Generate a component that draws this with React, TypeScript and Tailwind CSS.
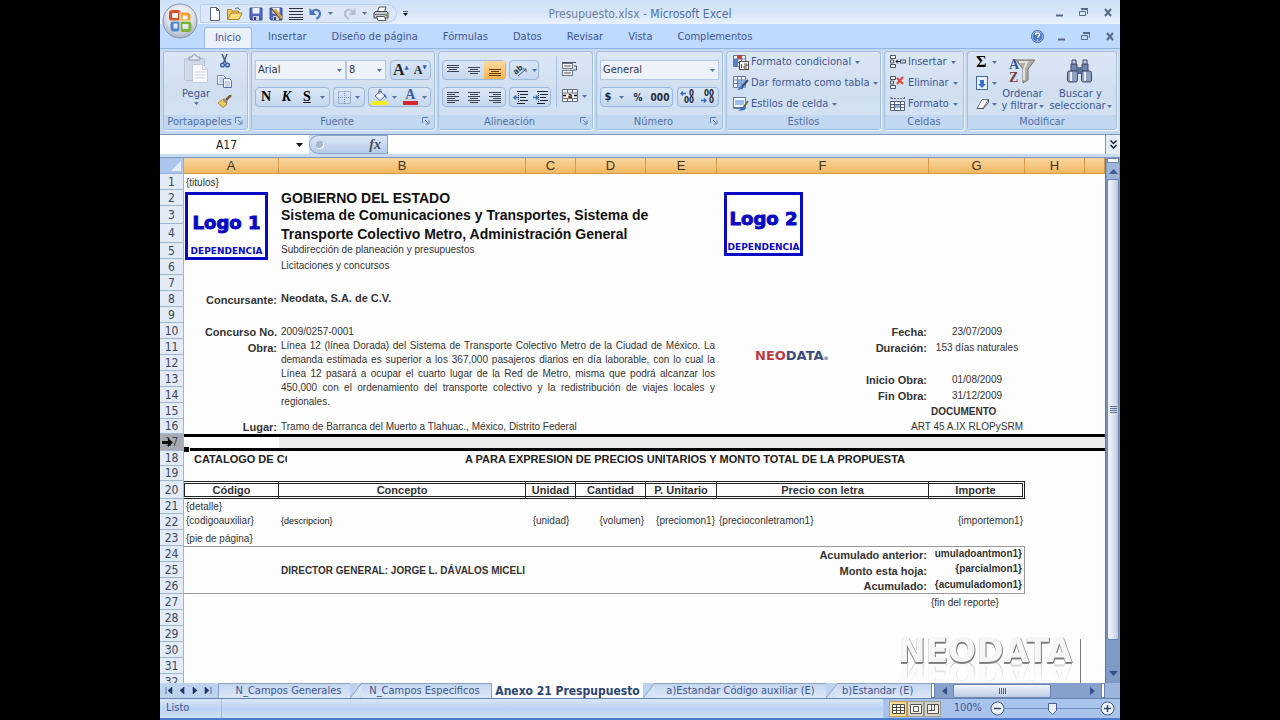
import { clsx } from "clsx";
import type { ReactNode } from "react";

const UI = "font-['DejaVu_Sans_Condensed','DejaVu_Sans',sans-serif]";

function Svg({ w, h, children }: { w: number; h: number; children: ReactNode }) {
  return (
    <svg width={w} height={h} viewBox={`0 0 ${w} ${h}`} fill="none" className="shrink-0" aria-hidden="true">
      {children}
    </svg>
  );
}

function Caret({ dark = false }: { dark?: boolean }) {
  return (
    <Svg w={5} h={3}>
      <path d="M0 0h5L2.500 3z" fill={dark ? "#111" : "#5673a5"} />
    </Svg>
  );
}

// Horizontal bars, used by every text alignment icon.
function Bars({ bars, color = "#3c4250" }: { bars: [number, number, number][]; color?: string }) {
  return (
    <Svg w={14} h={14}>
      {bars.map(([x, y, w]) => (
        <rect key={y} x={x} y={y} width={w} height={1} fill={color} />
      ))}
    </Svg>
  );
}

function IconButton({
  label,
  className = "",
  children,
}: {
  label: string;
  className?: string;
  children: ReactNode;
}) {
  return (
    <button type="button" aria-label={label} className={clsx("flex flex-1 items-center justify-center gap-1", className)}>
      {children}
    </button>
  );
}

function Cluster({ className = "", children }: { className?: string; children: ReactNode }) {
  return (
    <div className={clsx("flex h-5 items-stretch rounded-sm border border-[#9cb7dc] bg-linear-to-b from-[#d9e6f6] to-[#c6d8ee]", className)}>
      {children}
    </div>
  );
}

function Picker({ label, value, className = "" }: { label: string; value: string; className?: string }) {
  return (
    <div className={clsx("relative h-5", className)}>
      <select
        aria-label={label}
        defaultValue={value}
        className="block h-full w-full appearance-none border border-[#b3c8e4] bg-[#eef3fb] pl-[2px] text-[11px] text-[#33334d]"
      >
        <option>{value}</option>
      </select>
      <span className="pointer-events-none absolute inset-y-0 right-1 flex items-center">
        <Caret />
      </span>
    </div>
  );
}

function Group({
  title,
  launcher = false,
  className = "",
  children,
}: {
  title: string;
  launcher?: boolean;
  className?: string;
  children: ReactNode;
}) {
  return (
    <section className={clsx("flex flex-col rounded-[3px] border border-[#a3bede] bg-linear-to-b from-[#dce7f5] via-[#d0dff0] to-[#d5e4f5] shadow-[1px_1px_0_#eaf2fb]", className)}>
      <div className="flex-1">{children}</div>
      <footer className="relative flex h-[14px] items-center justify-center bg-[#c1d8f0] text-[11px] text-[#5470a6]">
        <span className={clsx(launcher && "pr-3")}>{title}</span>
        {launcher && (
          <button type="button" aria-label={`Opciones de ${title}`} className="absolute top-[2px] right-1">
            <Svg w={8} h={8}>
              <path d="M.5 6V.5H6M3 3l3 3M7 3.500V7H3.500" stroke="#6480ae" />
            </Svg>
          </button>
        )}
      </footer>
    </section>
  );
}

/* ---------- Icons ---------- */

function OfficeLogo() {
  return (
    <Svg w={36} h={36}>
      <defs>
        <radialGradient id="orb" cx=".5" cy=".35" r=".65">
          <stop offset="0" stopColor="#fff" />
          <stop offset=".6" stopColor="#dfe3ea" />
          <stop offset="1" stopColor="#a9b3c4" />
        </radialGradient>
      </defs>
      <circle cx="18" cy="18" r="17" fill="url(#orb)" stroke="#8592ab" />
      <rect x="8.500" y="8.500" width="9" height="8" rx="2" stroke="#d8502a" strokeWidth="3" />
      <rect x="19" y="11" width="8" height="7" rx="2" stroke="#f0a030" strokeWidth="3" />
      <rect x="10" y="19" width="7" height="8" rx="2" stroke="#4d86d0" strokeWidth="3" />
      <rect x="19" y="19.500" width="9" height="8" rx="2" stroke="#7fb23c" strokeWidth="3" />
      <path d="M18 9v19M9 18h19" stroke="#fff4d8" />
    </Svg>
  );
}

function Save({ pencil = false }: { pencil?: boolean }) {
  return (
    <Svg w={14} h={14}>
      <path d="M1 1h12v12H2l-1-1z" fill="#5366bd" stroke="#3b4a94" />
      <rect x="3.500" y="1" width="7" height="5.500" fill="#eef2fb" />
      <rect x="4" y="9" width="6" height="4" fill="#c9cfdf" />
      <rect x="5" y="10" width="2" height="3" fill="#333c66" />
      {pencil && <path d="M4 3l8 9M6 2l7 9" stroke="#d7a44a" strokeWidth="2" />}
      {pencil && <path d="M3 2l9 11" stroke="#4b4430" />}
    </Svg>
  );
}

function Undo({ faded = false, flip = false }: { faded?: boolean; flip?: boolean }) {
  return (
    <Svg w={13} h={13}>
      <g transform={flip ? "matrix(-1 0 0 1 13 0)" : undefined}>
        <path d="M3 5c3-4 8-2 8 1.500 0 2.500-1.500 4-3.500 5.500" stroke={faded ? "#b4bfd0" : "#4a74c4"} strokeWidth="2.200" />
        <path d="M.5 1v7h7z" fill={faded ? "#b4bfd0" : "#4a74c4"} />
      </g>
    </Svg>
  );
}

function Printer() {
  return (
    <Svg w={16} h={16}>
      <path d="M4.500 6L6 1h7l-1.500 5" fill="#fff" stroke="#555" />
      <path d="M1 7l2-1.500h11L15 7v5H1z" fill="#c8cbd2" stroke="#45474e" />
      <path d="M3.500 10.500h8l1.500 4h-8z" fill="#fff" stroke="#555" />
      <path d="M2 8.500h12" stroke="#6d7078" />
      <rect x="12" y="8" width="2" height="2" fill="#6aa83a" />
    </Svg>
  );
}

function Paste() {
  return (
    <Svg w={26} h={30}>
      <rect x="1.500" y="4.500" width="20" height="22" rx="1" fill="#cfd9e8" stroke="#b4c2d6" />
      <path d="M6 6V3h3c0-3 5-3 5 0h3v3z" fill="#e4e8ef" stroke="#8b98ac" />
      <path d="M9.500 10.500h10l5 5v13h-15z" fill="#f8fafd" stroke="#c2cad8" />
      <path d="M19.500 10.500v5h5M12 18h10M12 21h10M12 24h10" stroke="#ccd5e3" />
    </Svg>
  );
}

function Scissors() {
  return (
    <Svg w={12} h={14}>
      <path d="M3 0l4 9M8 0L4.500 9" stroke="#46597e" strokeWidth="1.500" />
      <circle cx="3.500" cy="11" r="1.800" stroke="#3b5fae" strokeWidth="1.500" />
      <circle cx="8.500" cy="11" r="1.800" stroke="#3b5fae" strokeWidth="1.500" />
    </Svg>
  );
}

function Copy() {
  return (
    <Svg w={15} h={13}>
      <path d="M.5.5h6l2 2v7h-8z" fill="#f2f6fd" stroke="#6a8ac4" />
      <path d="M2 3h4M2 5h4M2 7h4" stroke="#9ab2dc" />
      <path d="M6.500 3.500h6l2 2v7h-8z" fill="#f2f6fd" stroke="#5478b8" />
      <path d="M8 7h5M8 9h5M8 11h5" stroke="#9ab2dc" />
    </Svg>
  );
}

function Brush() {
  return (
    <Svg w={14} h={13}>
      <path d="M13 0L8 5" stroke="#7b5a2d" strokeWidth="2.500" />
      <path d="M6 3l4 4-1.500 1.500-4-4z" fill="#8d9099" />
      <path d="M4.500 4.500l4.500 4.500-4 3.500L0 8z" fill="#e8c860" stroke="#a98c35" />
    </Svg>
  );
}

function Bucket() {
  return (
    <Svg w={16} h={16}>
      <rect x="0" y="12" width="15" height="4" fill="#f4f01c" />
      <path d="M3 7l5-5 5 5-5 4.500z" fill="#eef2f7" stroke="#5a6478" />
      <path d="M7 5V1.500C7 0 9 0 9 1.500V4" stroke="#5a6478" />
      <path d="M12 5c2 0 3 2 2.500 5L12 7z" fill="#4d6fb3" />
    </Svg>
  );
}

function Borders() {
  return (
    <Svg w={13} h={13}>
      <path d="M.5.5h12v12H.5zM6.500 0v13M0 6.500h13" stroke="#7d8ba6" strokeDasharray="1 1" />
    </Svg>
  );
}

function Indent({ out = false }: { out?: boolean }) {
  return (
    <Svg w={15} h={13}>
      <path d="M4 .5h11M7 3.500h8M7 6.500h6M7 9.500h8M4 12.500h8" stroke="#1d2230" />
      <path d={out ? "M6 6.500H1M3 4.500l-2 2 2 2" : "M0 6.500h5M3 4.500l2 2-2 2"} stroke="#3a6fbd" strokeWidth="1.500" />
      <path d="M5.500 0v13" stroke="#1d2230" strokeDasharray="1 1" />
    </Svg>
  );
}

function Orientation() {
  return (
    <Svg w={16} h={16}>
      <text x="2" y="10" fontSize="8" fontWeight="700" fill="#333a48" transform="rotate(-40 7 9)">
        ab
      </text>
      <path d="M6 14l8-7M11 7h3v3" stroke="#4d556a" />
    </Svg>
  );
}

function WrapText() {
  return (
    <Svg w={16} h={15}>
      <rect x=".5" y="1.500" width="10" height="5" fill="#f5f7fb" stroke="#6d7686" />
      <rect x=".5" y="8.500" width="10" height="5" fill="#f5f7fb" stroke="#6d7686" />
      <path d="M0 .5h14M2 4h7M2 11h7M12 4h2.500v4H11" stroke="#4a5260" />
    </Svg>
  );
}

function MergeCells() {
  return (
    <Svg w={16} h={14}>
      <path d="M.5.5h15v12H.5zM0 4h16M0 9.500h16M5.500 0v4M10.500 0v4M5.500 9.500V13M10.500 9.500V13" fill="#f1f4f9" stroke="#68707f" />
      <path d="M1 6.500h3M12 6.500h3" stroke="#111" strokeWidth="1.500" />
      <text x="6" y="9" fontSize="7" fontWeight="700" fill="#111">
        a
      </text>
    </Svg>
  );
}

function Decimals({ add = false }: { add?: boolean }) {
  return (
    <Svg w={16} h={16}>
      <path
        d={add ? "M6 4.500H1M3 2.500l-2 2 2 2" : "M1 11.500h5M4 9.500l2 2-2 2"}
        stroke="#3a6fbd"
        strokeWidth="1.500"
      />
      <g fill="#222838" fontSize="8" fontWeight="700">
        <text x={add ? 9 : 4} y="7">
          {add ? "0" : "00"}
        </text>
        <text x={add ? 4 : 9} y="14">
          {add ? "00" : "0"}
        </text>
      </g>
    </Svg>
  );
}

function StyleIcon({ kind }: { kind: "conditional" | "table" | "cell" }) {
  return (
    <Svg w={16} h={16}>
      <path d="M.5 1.500h12v11H.5zM0 5h13M0 8.500h13M4.500 1v12M8.500 1v12" fill="#fafcff" stroke="#5f7bab" />
      {kind === "conditional" && (
        <>
          <rect x="4" y="1" width="5" height="4" fill="#c4443e" />
          <rect x="1" y="5" width="3" height="7" fill="#5b7fc6" />
          <rect x="6.500" y="7.500" width="9" height="8" fill="#fff" stroke="#53463d" />
          <path d="M8.500 10v4M11 10h3v2h-3v2h3" stroke="#53463d" />
        </>
      )}
      {kind === "table" && (
        <>
          <rect x="5" y="5" width="8" height="8" fill="#79a3e2" opacity=".8" />
          <path d="M15 5l-7 8" stroke="#3a4a66" strokeWidth="2" />
          <path d="M9 10l-5 5 6-1z" fill="#4a76c0" />
        </>
      )}
      {kind === "cell" && (
        <>
          <rect x=".5" y="1.500" width="12" height="10" fill="#f4f8ff" stroke="#5f7bab" />
          <rect x="2" y="4" width="9" height="5" fill="#9dbdec" />
          <path d="M15 5l-5 7" stroke="#6d6a45" strokeWidth="2" />
          <path d="M11 10l-6 5 7-1z" fill="#3f6cba" />
        </>
      )}
    </Svg>
  );
}

function CellIcon({ kind }: { kind: "insert" | "delete" | "format" }) {
  if (kind === "format") {
    return (
      <Svg w={16} h={16}>
        <path d="M1 1v3M14.500 1v3M1 2.500h14" stroke="#53617e" strokeDasharray="2 1" />
        <path d="M.5 5.500h14v9H.5zM0 8.500h15M0 11.500h15M4.500 5v10M10.500 5v10" fill="#fff" stroke="#53617e" />
        <rect x="5" y="9" width="5" height="3" fill="#8faad4" />
      </Svg>
    );
  }
  return (
    <Svg w={16} h={14}>
      <path d="M.5.5h5v3h-5zM.5 9.500h5v3h-5zM.5 5h3v3h-3z" fill="#fff" stroke="#4a5468" />
      {kind === "insert" ? (
        <>
          <path d="M10 6.500H6M8 4.500l-2 2 2 2" stroke="#111" />
          <rect x="10.500" y="5" width="5" height="3" fill="#c8d8f0" stroke="#4a5468" />
        </>
      ) : (
        <path d="M7 2l6 6M13 1L7 8" stroke="#e0443a" strokeWidth="2" />
      )}
    </Svg>
  );
}

function FillDown() {
  return (
    <Svg w={12} h={14}>
      <rect x=".5" y=".5" width="11" height="13" fill="#e6eefb" stroke="#45679f" />
      <path d="M4 4h4v4h2l-4 4-4-4h2z" fill="#3a6fca" />
    </Svg>
  );
}

function Eraser() {
  return (
    <Svg w={14} h={12}>
      <path d="M6 1.500h6.500L8 8.500 6 10.500H1z" fill="#fff" stroke="#737987" />
      <path d="M12.500 1.500v3L7 11M1 10.500h7" stroke="#4b505c" />
    </Svg>
  );
}

function SortFilter() {
  return (
    <Svg w={28} h={28}>
      <path d="M8 4h19l-7 9v11l-5 3V13z" fill="#b1aea8" stroke="#77736c" />
      <path d="M11 6h8l-3 7v11" stroke="#e3e1dc" strokeWidth="2" />
      <text x="1" y="13" fontSize="14" fontWeight="700" fontFamily="Liberation Serif" fill="#35559c">
        A
      </text>
      <text x="1" y="26" fontSize="14" fontWeight="700" fontFamily="Liberation Serif" fill="#7d3b42">
        Z
      </text>
    </Svg>
  );
}

function Binoculars() {
  return (
    <Svg w={28} h={26}>
      <path d="M5 6h6v7H5zM16 6h6v7h-6z" fill="#7587a8" stroke="#3c4b6b" />
      <path d="M6 2h4v4H6zM17 2h4v4h-4z" fill="#c0cbdf" stroke="#3c4b6b" />
      <path d="M11 9h5v7h-5z" fill="#5d6f92" />
      <rect x="1.500" y="13" width="10" height="11" rx="2" fill="#8fa0c0" stroke="#3c4b6b" />
      <rect x="15.500" y="13" width="10" height="11" rx="2" fill="#8fa0c0" stroke="#3c4b6b" />
      <path d="M5 14v9M19 14v9" stroke="#e8eef8" strokeWidth="2" />
    </Svg>
  );
}

function WindowControls({ className = "" }: { className?: string }) {
  return (
    <div className={clsx("flex items-center gap-4", className)}>
      <button type="button" aria-label="Minimizar">
        <Svg w={7} h={9}>
          <path d="M0 7.500h7" stroke="#5a6a86" strokeWidth="2" />
        </Svg>
      </button>
      <button type="button" aria-label="Restaurar">
        <Svg w={9} h={9}>
          <path d="M2 1.500h6.500V6M.5 3.500h6v4h-6z" stroke="#5a6a86" />
          <path d="M2 1h7" stroke="#5a6a86" strokeWidth="2" />
        </Svg>
      </button>
      <button type="button" aria-label="Cerrar">
        <Svg w={8} h={9}>
          <path d="M1 1l6 7M7 1L1 8" stroke="#5a6a86" strokeWidth="2" />
        </Svg>
      </button>
    </div>
  );
}

/* ---------- Top chrome ---------- */

function TitleBar() {
  return (
    <header className="relative flex h-6 items-center justify-center bg-linear-to-b from-[#cfe2fb] via-[#d6e5f8] to-[#e9f2fd]">
      <button type="button" aria-label="Botón de Office" className="absolute top-[3px] left-[2px] z-10">
        <OfficeLogo />
      </button>
      <div className="absolute top-1 left-10 flex h-[19px] w-[197px] items-center rounded-r-full border border-[#b9cfec] bg-[#dbe7f6] pl-2">
        <div className="flex items-center gap-[6px]">
          <Svg w={12} h={14}>
            <path d="M1.500.5h6l3 3v10h-9z" fill="#fff" stroke="#5b6475" />
            <path d="M7.500.5v3h3" stroke="#5b6475" />
          </Svg>
          <Svg w={16} h={13}>
            <path d="M.5 12V2.500h4l1 1.500h6V6" fill="#f2c84f" stroke="#a7812c" />
            <path d="M.5 12.500L4 6h11L12 12.500z" fill="#fbdd7b" stroke="#a7812c" />
            <path d="M8 2c2-2 4-1 5 1" stroke="#3d5a94" />
          </Svg>
          <Save />
          <Save pencil />
          <Svg w={14} h={12}>
            <path d="M0 .5h14M0 3.500h14M0 6.500h14M0 9.500h14M0 11.500h14" stroke="#2c313d" />
          </Svg>
          <Undo />
          <Caret />
          <span className="ml-1 flex items-center gap-[6px]">
            <Undo faded flip />
            <Caret />
          </span>
          <Printer />
        </div>
        <span className="absolute top-[6px] -right-3 flex flex-col items-center gap-px">
          <span className="h-px w-[5px] bg-[#3f5786]" />
          <Caret dark />
        </span>
      </div>
      <h1 className="pt-1 text-xs text-[#6d7f9d]">
        Presupuesto.xlsx - <span className="text-[#4c6ea8]">Microsoft Excel</span>
      </h1>
      <WindowControls className="absolute top-2 right-2" />
    </header>
  );
}

const tabs = ["Insertar", "Diseño de página", "Fórmulas", "Datos", "Revisar", "Vista", "Complementos"];

function TabRow() {
  return (
    <nav className="flex h-6 items-end bg-[#bfdaff] pl-11 text-[11px] text-[#3f5590]">
      <a href="#inicio" className="flex h-[21px] w-12 items-center justify-center rounded-t-[3px] border border-b-0 border-[#9dbbe6] bg-[#eaf1fb]">
        Inicio
      </a>
      <div className="flex h-[21px] flex-1 items-center gap-[25px] pl-4">
        {tabs.map((tab) => (
          <a key={tab} href={`#${tab}`}>
            {tab}
          </a>
        ))}
      </div>
      <div className="flex h-6 items-center gap-[14px] pr-[6px]">
        <button type="button" aria-label="Ayuda">
          <Svg w={13} h={13}>
            <circle cx="6.500" cy="6.500" r="5.500" fill="#4877c9" stroke="#dce9fb" />
            <circle cx="6.500" cy="6.500" r="6" stroke="#3a62ad" />
            <path d="M4.500 5c0-3 4-2.500 4 0 0 1.500-2 1.500-2 3M6.500 9.500v1" stroke="#fff" strokeWidth="1.500" />
          </Svg>
        </button>
        <WindowControls />
      </div>
    </nav>
  );
}

function MenuButton({ icon, children }: { icon: ReactNode; children: ReactNode }) {
  return (
    <button type="button" className="flex h-5 items-center gap-[2px] whitespace-nowrap text-[11px] text-[#3f5590]">
      {icon}
      <span className="pr-[2px]">{children}</span>
      <Caret />
    </button>
  );
}

function Ribbon() {
  return (
    <div className="flex h-[86px] gap-[3px] border-t border-[#8db2e3] bg-[#c6d9ee] px-[3px] pt-[2px] pb-1">
      <Group title="Portapapeles" launcher className="w-[85px]">
        <div className="flex pt-[2px] pl-[18px]">
          <button type="button" className="flex flex-col items-center text-[11px] text-[#3f5590]">
            <Paste />
            <span className="mt-[2px] leading-4">Pegar</span>
            <Caret />
          </button>
          <div className="flex flex-col items-center gap-[7px] pl-[7px]">
            <button type="button" aria-label="Cortar">
              <Scissors />
            </button>
            <button type="button" aria-label="Copiar">
              <Copy />
            </button>
            <button type="button" aria-label="Copiar formato">
              <Brush />
            </button>
          </div>
        </div>
      </Group>

      <Group title="Fuente" launcher className="w-[184px]">
        <div className="flex flex-col gap-[7px] px-[3px] pt-2">
          <div className="flex">
            <Picker label="Fuente" value="Arial" className="w-[91px]" />
            <Picker label="Tamaño de fuente" value="8" className="w-10" />
            <Cluster className="ml-1 flex-1">
              <IconButton label="Aumentar tamaño">
                <span className="font-['Liberation_Serif',serif] text-base leading-4 font-bold text-[#222]">A</span>
                <span className="-ml-1 h-3 text-[6px] leading-none text-[#3a5fae]">▲</span>
              </IconButton>
              <IconButton label="Reducir tamaño">
                <span className="font-['Liberation_Serif',serif] text-xs leading-4 font-bold text-[#222]">A</span>
                <span className="-ml-1 h-3 text-[6px] leading-none text-[#3a5fae]">▼</span>
              </IconButton>
            </Cluster>
          </div>
          <div className="flex gap-[3px] font-['Liberation_Serif',serif] text-sm text-black">
            <Cluster className="w-[75px]">
              <IconButton label="Negrita">
                <b>N</b>
              </IconButton>
              <IconButton label="Cursiva">
                <b className="italic">K</b>
              </IconButton>
              <IconButton label="Subrayado">
                <b className="underline">S</b>
              </IconButton>
              <IconButton label="Tipo de subrayado" className="max-w-3">
                <Caret />
              </IconButton>
            </Cluster>
            <Cluster className="w-8">
              <IconButton label="Bordes">
                <Borders />
                <Caret />
              </IconButton>
            </Cluster>
            <Cluster className="flex-1">
              <IconButton label="Color de relleno">
                <Bucket />
                <Caret />
              </IconButton>
              <IconButton label="Color de fuente">
                <span className="flex h-4 w-[15px] items-center justify-center border-b-4 border-[#d8262c] text-sm font-bold text-[#3d5aa0]">
                  A
                </span>
                <Caret />
              </IconButton>
            </Cluster>
          </div>
        </div>
      </Group>

      <Group title="Alineación" launcher className="w-[155px]">
        <div className="flex pt-2 pl-[3px]">
          <div className="flex w-[111px] flex-col gap-[7px]">
            <div className="flex gap-[3px]">
              <Cluster className="w-16">
                <IconButton label="Alinear arriba">
                  <Bars bars={[[1, 2, 12], [1, 4, 12], [3, 6, 8], [1, 8, 12]]} />
                </IconButton>
                <IconButton label="Alinear en el medio">
                  <Bars bars={[[1, 4, 12], [3, 6, 8], [1, 8, 12], [3, 10, 8]]} />
                </IconButton>
                <IconButton label="Alinear abajo" className="bg-linear-to-b from-[#fbd9a0] to-[#fdb44a]">
                  <Bars color="#5f3d0d" bars={[[1, 6, 12], [3, 8, 8], [1, 10, 12], [1, 12, 12]]} />
                </IconButton>
              </Cluster>
              <Cluster className="w-[30px]">
                <IconButton label="Orientación">
                  <Orientation />
                  <Caret />
                </IconButton>
              </Cluster>
            </div>
            <div className="flex gap-[3px]">
              <Cluster className="w-16">
                <IconButton label="Alinear a la izquierda">
                  <Bars bars={[[1, 2, 12], [1, 4, 8], [1, 6, 12], [1, 8, 8], [1, 10, 12], [1, 12, 8]]} />
                </IconButton>
                <IconButton label="Centrar">
                  <Bars bars={[[1, 2, 12], [3, 4, 8], [1, 6, 12], [3, 8, 8], [1, 10, 12], [3, 12, 8]]} />
                </IconButton>
                <IconButton label="Alinear a la derecha">
                  <Bars bars={[[1, 2, 12], [5, 4, 8], [1, 6, 12], [5, 8, 8], [1, 10, 12], [5, 12, 8]]} />
                </IconButton>
              </Cluster>
              <Cluster className="w-[42px]">
                <IconButton label="Disminuir sangría">
                  <Indent out />
                </IconButton>
                <IconButton label="Aumentar sangría">
                  <Indent />
                </IconButton>
              </Cluster>
            </div>
          </div>
          <div className="-mt-1 ml-[3px] flex flex-col gap-3 border-l border-[#a9c1e0] pt-[6px] pl-[5px]">
            <button type="button" aria-label="Ajustar texto">
              <WrapText />
            </button>
            <button type="button" aria-label="Combinar y centrar" className="flex items-center gap-1">
              <MergeCells />
              <Caret />
            </button>
          </div>
        </div>
      </Group>

      <Group title="Número" launcher className="w-[127px]">
        <div className="flex flex-col gap-[7px] px-[3px] pt-2">
          <Picker label="Formato de número" value="General" />
          <div className="flex gap-1 text-[10px] font-bold text-[#222838]">
            <Cluster className="flex-1">
              <IconButton label="Moneda">
                <span className="pr-1 text-[11px]">$</span>
                <Caret />
              </IconButton>
              <IconButton label="Porcentaje" className="max-w-5">
                %
              </IconButton>
              <IconButton label="Millares" className="max-w-6">
                000
              </IconButton>
            </Cluster>
            <Cluster className="w-[42px]">
              <IconButton label="Aumentar decimales">
                <Decimals add />
              </IconButton>
              <IconButton label="Disminuir decimales">
                <Decimals />
              </IconButton>
            </Cluster>
          </div>
        </div>
      </Group>

      <Group title="Estilos" className="w-[155px]">
        <div className="flex flex-col gap-px pl-[6px]">
          <MenuButton icon={<StyleIcon kind="conditional" />}>Formato condicional</MenuButton>
          <MenuButton icon={<StyleIcon kind="table" />}>Dar formato como tabla</MenuButton>
          <MenuButton icon={<StyleIcon kind="cell" />}>Estilos de celda</MenuButton>
        </div>
      </Group>

      <Group title="Celdas" className="w-[80px]">
        <div className="flex flex-col gap-px pl-[5px]">
          <MenuButton icon={<CellIcon kind="insert" />}>Insertar</MenuButton>
          <MenuButton icon={<CellIcon kind="delete" />}>Eliminar</MenuButton>
          <MenuButton icon={<CellIcon kind="format" />}>Formato</MenuButton>
        </div>
      </Group>

      <Group title="Modificar" className="w-[150px]">
        <div className="flex pl-2 text-[11px] text-[#3f5590]">
          <div className="flex flex-col gap-px">
            <button type="button" aria-label="Autosuma" className="flex h-5 items-center gap-[6px] font-['Liberation_Serif',serif] text-base font-bold text-black">
              Σ
              <Caret />
            </button>
            <button type="button" aria-label="Rellenar" className="flex h-5 items-center gap-1">
              <FillDown />
              <Caret />
            </button>
            <button type="button" aria-label="Borrar" className="flex h-5 items-center gap-[2px]">
              <Eraser />
              <Caret />
            </button>
          </div>
          <button type="button" className="flex w-[50px] flex-col items-center pt-1 leading-3 whitespace-nowrap">
            <SortFilter />
            <span className="mt-1">Ordenar</span>
            <span className="flex items-center gap-px">
              y filtrar <Caret />
            </span>
          </button>
          <button type="button" className="flex w-[66px] flex-col items-center pt-[6px] leading-3 whitespace-nowrap">
            <Binoculars />
            <span className="mt-1">Buscar y</span>
            <span className="flex items-center gap-px">
              seleccionar <Caret />
            </span>
          </button>
        </div>
      </Group>
    </div>
  );
}

function FormulaBar() {
  return (
    <div className="flex h-6 items-stretch border-y border-[#7d96bd] bg-[#c9dbf2] pb-[3px]">
      <label className="relative flex w-[149px] items-center bg-white">
        <input aria-label="Cuadro de nombres" defaultValue="A17" className="w-full pr-4 text-center text-xs text-[#222]" />
        <span className="pointer-events-none absolute right-[6px]">
          <Svg w={7} h={4}>
            <path d="M0 0h7L3.500 4z" fill="#111" />
          </Svg>
        </span>
      </label>
      <button type="button" aria-label="Insertar función" className="flex w-[79px] items-center justify-between rounded-l-full border border-[#8ba3c9] bg-linear-to-b from-[#dce7f6] to-[#b4cbe9] px-[6px]">
        <span className="size-2 rounded-full bg-[#a9b7cd] shadow-[inset_-1px_-1px_0_#fff]" />
        <span className="font-['Liberation_Serif',serif] text-sm font-bold text-[#4a4f5c] italic">fx</span>
      </button>
      <input aria-label="Barra de fórmulas" className="min-w-0 flex-1 bg-[#fdfdfe]" />
      <button type="button" aria-label="Expandir barra" className="flex w-[15px] items-center justify-center border-l border-[#7d96bd] bg-[#e5edf9]">
        <Svg w={7} h={9}>
          <path d="M.5.5l3 3 3-3M.5 5l3 3 3-3" stroke="#222" strokeWidth="1.500" />
        </Svg>
      </button>
    </div>
  );
}

/* ---------- Sheet ---------- */

function Row({ n, h = "h-4", children }: { n: number; h?: string; children?: ReactNode }) {
  const selected = n === 17;
  return (
    <tr className={h}>
      <th
        scope="row"
        className={clsx(
          "relative border-r border-b border-[#9eb6ce] text-center text-xs leading-3 font-normal text-[#3b475e]",
          selected ? "bg-[#a9adb3]" : "bg-[#e3ebf7]",
          UI,
        )}
      >
        {n}
        {selected && (
          <span className="absolute top-1 left-[2px]">
            <Svg w={11} h={9}>
              <path d="M0 3h6V0l5 4.500L6 9V6H0z" fill="#111" />
            </Svg>
          </span>
        )}
      </th>
      {children ?? <td colSpan={9} />}
    </tr>
  );
}

function Cell({
  span = 1,
  middle = false,
  className = "",
  children,
}: {
  span?: number;
  middle?: boolean;
  className?: string;
  children?: ReactNode;
}) {
  return (
    <td colSpan={span} className={clsx("px-[2px] whitespace-nowrap", middle ? "pb-[2px] align-middle" : "pb-px align-bottom", className)}>
      {children}
    </td>
  );
}

const right = "text-right";
const label = "text-right text-[11px] font-bold";
const heading = "text-sm leading-4 font-bold text-[#111]";

function Logo({ name, className }: { name: string; className: string }) {
  return (
    <div className={clsx("absolute top-[2px] z-10 flex flex-col items-center justify-end border-[3px] border-[#0a0ac4] bg-white font-['DejaVu_Sans',sans-serif] font-bold text-[#0a0ac4]", className)}>
      <span className="text-lg leading-5 [-webkit-text-stroke:1px_#0a0ac4]">{name}</span>
      <span className="mt-3 text-[9px] leading-3">DEPENDENCIA</span>
    </div>
  );
}

const obra = [
  "Línea 12 (línea Dorada) del Sistema de Transporte Colectivo Metro de la Ciudad de México. La",
  "demanda estimada es superior a los 367,000 pasajeros diarios en día laborable, con lo cual la",
  "Línea 12 pasará a ocupar el cuarto lugar de la Red de Metro, misma que podrá alcanzar los",
  "450,000 con el ordenamiento del transporte colectivo y la redistribución de viajes locales y",
  "regionales.",
];

const columns = ["A", "B", "C", "D", "E", "F", "G", "H", ""];
const headings = ["Código", "Concepto", "Unidad", "Cantidad", "P. Unitario", "Precio con letra", "Importe"];

function Sheet() {
  return (
    <table className="w-full table-fixed border-separate border-spacing-0 bg-[#fdfdfd] font-['Liberation_Sans',sans-serif] text-[10px] leading-3 text-[#333]">
      <colgroup>
        <col className="w-6" />
        <col className="w-[95px]" />
        <col className="w-[247px]" />
        <col className="w-[50px]" />
        <col className="w-[70px]" />
        <col className="w-[71px]" />
        <col className="w-[212px]" />
        <col className="w-24" />
        <col className="w-[60px]" />
        <col />
      </colgroup>
      <thead>
        <tr className="h-4">
          <td className="border-r border-b border-[#8fb0de] bg-[#abc6ec]">
            <span className="flex justify-end pr-[2px]">
              <Svg w={10} h={10}>
                <path d="M10 0v10H0z" fill="#e2ecfa" />
              </Svg>
            </span>
          </td>
          {columns.map((c) => (
            <th
              key={c}
              scope="col"
              className="border-r border-b border-[#d39b4c] bg-linear-to-b from-[#f9d6a0] to-[#f0b75e] text-[13px] leading-3 font-normal text-[#3d3522]"
            >
              {c}
            </th>
          ))}
        </tr>
      </thead>
      <tbody>
        <Row n={1}>
          <Cell>{"{titulos}"}</Cell>
          <td colSpan={8} />
        </Row>
        <Row n={2}>
          <td className="relative">
            <Logo name="Logo 1" className="left-px h-[68px] w-[83px]" />
          </td>
          <td colSpan={4} className={clsx("px-[2px] whitespace-nowrap", heading)}>
            GOBIERNO DEL ESTADO
          </td>
          <td className="relative">
            <Logo name="Logo 2" className="left-[7px] h-16 w-[79px]" />
          </td>
          <td colSpan={3} />
        </Row>
        <Row n={3} h="h-[18px]">
          <td />
          <Cell span={8} className={heading}>
            Sistema de Comunicaciones y Transportes, Sistema de
          </Cell>
        </Row>
        <Row n={4} h="h-[19px]">
          <td />
          <Cell span={8} className={heading}>
            Transporte Colectivo Metro, Administración General
          </Cell>
        </Row>
        <Row n={5}>
          <td />
          <Cell span={8} middle>
            Subdirección de planeación y presupuestos
          </Cell>
        </Row>
        <Row n={6}>
          <td />
          <Cell span={8} middle>
            Licitaciones y concursos
          </Cell>
        </Row>
        <Row n={7} />
        <Row n={8}>
          <Cell className={label}>Concursante:</Cell>
          <Cell span={8} middle className="text-[11px] font-bold">
            Neodata, S.A. de C.V.
          </Cell>
        </Row>
        <Row n={9} />
        <Row n={10}>
          <Cell className={label}>Concurso No.</Cell>
          <Cell span={4}>2009/0257-0001</Cell>
          <Cell className={label}>Fecha:</Cell>
          <Cell className="text-center">23/07/2009</Cell>
          <td colSpan={2} />
        </Row>
        <Row n={11}>
          <Cell className={label}>Obra:</Cell>
          <td colSpan={4} rowSpan={5} className="px-[2px] align-top leading-[14px]">
            {obra.map((line, i) => (
              <span
                key={line}
                className={clsx("block whitespace-nowrap text-justify", i < obra.length - 1 && "[text-align-last:justify]")}
              >
                {line}{" "}
              </span>
            ))}
          </td>
          <td className="relative px-[2px] pb-px text-right align-bottom text-[11px] font-bold">
            <span className="absolute top-[11px] left-[38px] font-['DejaVu_Sans',sans-serif] text-[13px] leading-3 text-[#3c4c7c]">
              <span className="text-[#b83a44]">NEO</span>DATA<span className="text-[5px]">®</span>
            </span>
            Duración:
          </td>
          <Cell className="text-center">153 días naturales</Cell>
          <td colSpan={2} />
        </Row>
        <Row n={12}>
          <td />
          <td colSpan={4} />
        </Row>
        <Row n={13}>
          <td />
          <Cell className={label}>Inicio Obra:</Cell>
          <Cell className="text-center">01/08/2009</Cell>
          <td colSpan={2} />
        </Row>
        <Row n={14}>
          <td />
          <Cell className={label}>Fin Obra:</Cell>
          <Cell className="text-center">31/12/2009</Cell>
          <td colSpan={2} />
        </Row>
        <Row n={15}>
          <td />
          <td />
          <Cell className="font-bold">DOCUMENTO</Cell>
          <td colSpan={2} />
        </Row>
        <Row n={16} h="h-[15px]">
          <Cell className={label}>Lugar:</Cell>
          <Cell span={4}>Tramo de Barranca del Muerto a Tlahuac., México, Distrito Federal</Cell>
          <Cell span={2} className={right}>
            ART 45 A.IX RLOPySRM
          </Cell>
          <td colSpan={2} />
        </Row>
        <Row n={17} h="h-[17px]">
          <td className="relative border-y-[3px] border-black bg-white">
            <span className="absolute -bottom-1 left-0 size-[6px] border-t border-r border-white bg-black" />
          </td>
          <td colSpan={8} className="border-y-[3px] border-black bg-[#ececec]" />
        </Row>
        <Row n={18} h="h-[15px]">
          <td colSpan={9} className="align-bottom text-[11px] leading-[14px] font-bold text-[#222]">
            <div className="flex whitespace-nowrap">
              <span className="ml-[10px] w-[93px] overflow-hidden">CATALOGO DE CO</span>
              <span className="ml-[178px]">A PARA EXPRESION DE PRECIOS UNITARIOS Y MONTO TOTAL DE LA PROPUESTA</span>
            </div>
          </td>
        </Row>
        <Row n={19} h="h-[15px]" />
        <Row n={20} h="h-[18px]">
          {headings.map((name, i) => (
            <td
              key={name}
              className={clsx(
                "border-y-[3px] border-double border-[#222] text-center text-[11px] font-bold",
                i === headings.length - 1 ? "border-r-[3px]" : "border-r [border-right-style:solid]",
                i === 0 && "border-l [border-left-style:solid]",
              )}
            >
              {name}
            </td>
          ))}
          <td colSpan={2} />
        </Row>
        <Row n={21} h="h-[15px]">
          <Cell span={9}>{"{detalle}"}</Cell>
        </Row>
        <Row n={22}>
          <Cell middle>{"{codigoauxiliar}"}</Cell>
          <Cell middle className="text-[9px] text-[#111]">
            {"{descripcion}"}
          </Cell>
          <Cell middle className="text-center">
            {"{unidad}"}
          </Cell>
          <Cell middle className={right}>
            {"{volumen}"}
          </Cell>
          <Cell middle className={right}>
            {"{preciomon1}"}
          </Cell>
          <Cell middle>{"{precioconletramon1}"}</Cell>
          <Cell middle className={right}>
            {"{importemon1}"}
          </Cell>
          <td colSpan={2} />
        </Row>
        <Row n={23}>
          <Cell span={9}>{"{pie de página}"}</Cell>
        </Row>
        <Row n={24}>
          <Cell span={6} className={clsx("border-t border-[#999]", label)}>
            Acumulado anterior:
          </Cell>
          <Cell middle className="border-t border-r border-[#999] text-right font-bold">
            {"umuladoantmon1}"}
          </Cell>
          <td colSpan={2} />
        </Row>
        <Row n={25}>
          <td />
          <Cell span={4} className="font-bold">
            DIRECTOR GENERAL: JORGE L. DÁVALOS MICELI
          </Cell>
          <Cell className={label}>Monto esta hoja:</Cell>
          <Cell middle className="border-r border-[#999] text-right font-bold">
            {"{parcialmon1}"}
          </Cell>
          <td colSpan={2} />
        </Row>
        <Row n={26}>
          <Cell span={6} className={clsx("border-b border-[#999]", label)}>
            Acumulado:
          </Cell>
          <Cell middle className="border-r border-b border-[#999] text-right font-bold">
            {"{acumuladomon1}"}
          </Cell>
          <td colSpan={2} />
        </Row>
        <Row n={27}>
          <td colSpan={6} />
          <Cell span={3}>{"{fin del reporte}"}</Cell>
        </Row>
        <Row n={28} />
        <Row n={29} />
        <Row n={30} />
        <Row n={31} />
        <Row n={32} />
      </tbody>
    </table>
  );
}

function Watermark() {
  return (
    <div className="absolute right-6 bottom-0 flex h-11 items-start border-r border-[#777] pr-2">
      <span className="font-['DejaVu_Sans',sans-serif] text-[33px] leading-6 font-bold text-[#f6f6f6] [-webkit-box-reflect:below_-2px_linear-gradient(transparent,rgba(0,0,0,.35))] [text-shadow:1px_1px_0_#777,0_2px_0_#888]">
        NEODATA
      </span>
    </div>
  );
}

function VerticalScroll() {
  return (
    <div className="flex w-[15px] flex-col border-l border-[#5b77a8] bg-[#7f9ac5] px-px">
      <div className="h-[5px] border border-[#6b84b0] bg-white" />
      <button type="button" aria-label="Subir" className="flex h-4 items-center justify-center bg-[#9fb6da]">
        <Svg w={9} h={5}>
          <path d="M0 5h9L4.500 0z" fill="#3f5c90" />
        </Svg>
      </button>
      <div className="flex flex-[20] flex-col items-center justify-center gap-px rounded-[2px] border border-[#6b84b0] bg-linear-to-r from-[#f4f6fb] via-[#dde4f1] to-[#bcc8e0]">
        {[0, 1, 2, 3].map((i) => (
          <span key={i} className="h-px w-[7px] bg-[#5f6f8f]" />
        ))}
      </div>
      <div className="flex-1" />
      <button type="button" aria-label="Bajar" className="flex h-5 items-center justify-center">
        <Svg w={9} h={5}>
          <path d="M0 0h9L4.500 5z" fill="#34508a" />
        </Svg>
      </button>
    </div>
  );
}

/* ---------- Bottom chrome ---------- */

function Slant() {
  return (
    <Svg w={12} h={15}>
      <path d="M0 15L12 0v15z" fill="#d3e2f6" />
      <path d="M0 15L12 0" stroke="#8aa2c6" />
    </Svg>
  );
}

function SheetTab({ name, className = "" }: { name: string; className?: string }) {
  return (
    <a href={`#${name}`} className={clsx("flex h-full items-center border-t border-[#8aa2c6] bg-linear-to-b from-[#c3d5ef] to-[#dbe8f8]", className)}>
      {name}
    </a>
  );
}

function SheetTabs() {
  return (
    <div className="flex h-4 items-stretch border-b border-[#6884b0] bg-[#bdd2ef] text-[11px] text-[#3f5590]">
      <div className="flex w-[59px] items-center justify-between border-r border-[#8aa2c6] pr-[6px] pl-[5px]">
        {["M1 0v7M7 0L3 3.500 7 7z", "M6 0L2 3.500 6 7z", "M2 0l4 3.500L2 7z", "M7 0v7M1 0l4 3.500L1 7z"].map((d, i) => (
          <button key={d} type="button" aria-label={["Primera hoja", "Hoja anterior", "Hoja siguiente", "Última hoja"][i]}>
            <Svg w={8} h={7}>
              <path d={d} fill="#1f3566" stroke="#1f3566" strokeWidth=".6" />
            </Svg>
          </button>
        ))}
      </div>
      <div className="flex min-w-0 flex-1 items-stretch overflow-hidden whitespace-nowrap">
        <SheetTab name="N_Campos Generales" className="w-[131px] justify-center pl-2" />
        <Slant />
        <SheetTab name="N_Campos Especificos" className="w-[130px] justify-center border-r pr-1" />
        <a href="#anexo" className="flex w-[151px] items-center justify-center bg-[#fdfdfd] text-xs font-bold text-[#2b4472]">
          Anexo 21 Prespupuesto
        </a>
        <Slant />
        <SheetTab name="a)Estandar Código auxiliar (E)" className="w-[171px] justify-center" />
        <Slant />
        <SheetTab name="b)Estandar (E)" className="flex-1 pl-1" />
      </div>
      <div className="flex w-[189px] items-center bg-[#86a1cb]">
        <span className="h-full w-1 border border-[#6b84b0] bg-white" />
        <button type="button" aria-label="Desplazar a la izquierda" className="flex flex-1 justify-center">
          <Svg w={5} h={8}>
            <path d="M5 0v8L0 4z" fill="#34508a" />
          </Svg>
        </button>
        <div className="flex h-[14px] w-[98px] items-center justify-center gap-px rounded-[2px] border border-[#6b84b0] bg-linear-to-b from-[#f2f5fb] to-[#bccbe6]">
          {[0, 1, 2, 3].map((i) => (
            <span key={i} className="h-[6px] w-px bg-[#55647f]" />
          ))}
        </div>
        <button type="button" aria-label="Desplazar a la derecha" className="flex w-[50px] justify-end pr-[6px]">
          <Svg w={5} h={8}>
            <path d="M0 0v8l5-4z" fill="#34508a" />
          </Svg>
        </button>
        <span className="h-full w-1 border border-[#6b84b0] bg-white" />
        <span className="h-full w-[15px] bg-[#9cb5dc]" />
      </div>
    </div>
  );
}

function ZoomButton({ plus = false }: { plus?: boolean }) {
  return (
    <button type="button" aria-label={plus ? "Acercar" : "Alejar"}>
      <Svg w={15} h={15}>
        <circle cx="7.500" cy="7.500" r="6.500" fill="#eef4fc" stroke="#4a5f87" />
        <path d={plus ? "M4 7.500h7M7.500 4v7" : "M4 7.500h7"} stroke="#33466c" strokeWidth="1.500" />
      </Svg>
    </button>
  );
}

function StatusBar() {
  return (
    <footer className="flex h-[21px] items-stretch border-b-2 border-[#4a7bcd] bg-linear-to-b from-[#d9e8fb] via-[#b9d2f4] to-[#cfe1f8] text-[11px] text-[#3f5590]">
      <div className="flex w-[62px] items-center border-r border-[#a5bfe4] pl-[6px]">Listo</div>
      <div className="flex-1" />
      <div className="flex items-center gap-[3px] bg-[#a9c4ec] pr-[5px] pl-[6px]">
        <div className="flex h-4">
          <button type="button" aria-label="Normal" className="flex w-[18px] items-center justify-center border border-[#c79c4a] bg-[#fbdc9a]">
            <Svg w={13} h={10}>
              <path d="M.5.5h12v9H.5zM0 3.500h13M0 6.500h13M4.500 0v10M8.500 0v10" fill="#fff" stroke="#4d4a40" />
            </Svg>
          </button>
          <button type="button" aria-label="Diseño de página" className="flex w-[17px] items-center justify-center border border-[#9d9d98] bg-[#d8d4c8]">
            <Svg w={12} h={10}>
              <path d="M.5.5h11v9H.5zM3.500 2.500h5v5h-5z" fill="#f5f5f2" stroke="#55544e" />
            </Svg>
          </button>
          <button type="button" aria-label="Vista previa de salto de página" className="flex w-[17px] items-center justify-center border border-[#9d9d98] bg-[#d8d4c8]">
            <Svg w={12} h={10}>
              <path d="M.5.5h11v9H.5zM4.500 0v6.500M7.500 0v6.500h-6" fill="#f5f5f2" stroke="#55544e" />
            </Svg>
          </button>
        </div>
        <span className="w-[38px] text-right">100%</span>
        <div className="flex items-center pl-[5px]">
          <ZoomButton />
          <div className="relative flex h-4 w-[95px] items-center">
            <span className="h-px w-full bg-[#6e8dbf]" />
            <span className="absolute top-[2px] left-[43px]">
              <Svg w={9} h={12}>
                <path d="M.5.5h8v7l-4 4-4-4z" fill="#e9f0fa" stroke="#4a5f87" />
              </Svg>
            </span>
          </div>
          <ZoomButton plus />
        </div>
      </div>
    </footer>
  );
}

export default function App() {
  return (
    <div className="h-screen bg-black">
      <div className={clsx("mx-auto flex h-full w-3/4 flex-col overflow-hidden bg-[#c6d9ee]", UI)}>
        <TitleBar />
        <TabRow />
        <Ribbon />
        <FormulaBar />
        <main className="flex min-h-0 flex-1">
          <div className="relative min-w-0 flex-1 overflow-hidden">
            <Sheet />
            <Watermark />
          </div>
          <VerticalScroll />
        </main>
        <SheetTabs />
        <StatusBar />
      </div>
    </div>
  );
}
